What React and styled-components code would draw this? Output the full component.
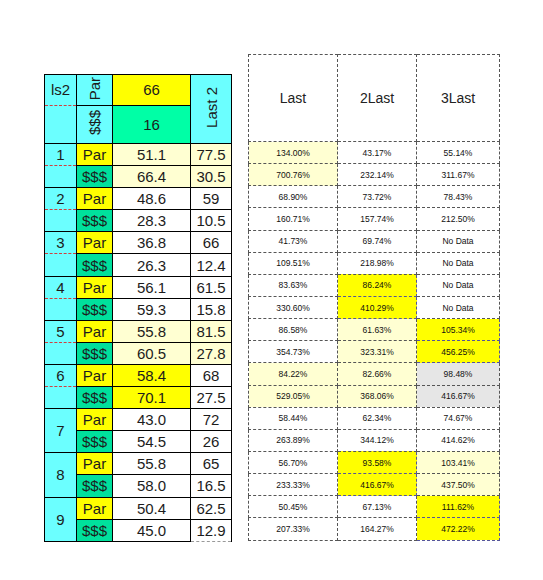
import React from 'react';
import styled, {createGlobalStyle} from 'styled-components';

const colors = {
	cyan: '#6bffff',
	yellow: '#ffff00',
	green: '#00e09c',
	mint: '#00ffa6',
	cream: '#ffffd2',
	gray: '#e6e6e6',
	white: '#ffffff'
};

const holes = [
	{n: 1, split: true, tint: 'cream', par: ['51.1', '77.5'], money: ['66.4', '30.5']},
	{n: 2, split: true, par: ['48.6', '59'], money: ['28.3', '10.5']},
	{n: 3, split: true, par: ['36.8', '66'], money: ['26.3', '12.4']},
	{n: 4, split: true, par: ['56.1', '61.5'], money: ['59.3', '15.8']},
	{n: 5, split: true, tint: 'cream', par: ['55.8', '81.5'], money: ['60.5', '27.8']},
	{n: 6, split: true, mid: 'yellow', par: ['58.4', '68'], money: ['70.1', '27.5']},
	{n: 7, par: ['43.0', '72'], money: ['54.5', '26']},
	{n: 8, par: ['55.8', '65'], money: ['58.0', '16.5']},
	{n: 9, par: ['50.4', '62.5'], money: ['45.0', '12.9']}
];

const ratios = [
	[['134.00%', 'cream'], ['43.17%'], ['55.14%']],
	[['700.76%', 'cream'], ['232.14%'], ['311.67%']],
	[['68.90%'], ['73.72%'], ['78.43%']],
	[['160.71%'], ['157.74%'], ['212.50%']],
	[['41.73%'], ['69.74%'], ['No Data']],
	[['109.51%'], ['218.98%'], ['No Data']],
	[['83.63%'], ['86.24%', 'yellow'], ['No Data']],
	[['330.60%'], ['410.29%', 'yellow'], ['No Data']],
	[['86.58%'], ['61.63%', 'cream'], ['105.34%', 'yellow']],
	[['354.73%'], ['323.31%', 'cream'], ['456.25%', 'yellow']],
	[['84.22%', 'cream'], ['82.66%', 'cream'], ['98.48%', 'gray']],
	[['529.05%', 'cream'], ['368.06%', 'cream'], ['416.67%', 'gray']],
	[['58.44%'], ['62.34%'], ['74.67%']],
	[['263.89%'], ['344.12%'], ['414.62%']],
	[['56.70%'], ['93.58%', 'yellow'], ['103.41%', 'cream']],
	[['233.33%'], ['416.67%', 'yellow'], ['437.50%', 'cream']],
	[['50.45%'], ['67.13%'], ['111.62%', 'yellow']],
	[['207.33%'], ['164.27%'], ['472.22%', 'yellow']]
];

const GlobalStyle = createGlobalStyle`
	body {
		margin: 0;
		background: #fff;
		font-family: "Liberation Sans", Arial, sans-serif;
	}
`;

const Page = styled.div`
	display: flex;
	align-items: flex-start;
	gap: 16px;
	padding: 54px 0 0 44px;
`;

const Scores = styled.table`
	margin-top: 20px;
	border-collapse: collapse;
	table-layout: fixed;
	width: 187px;
	font-size: 15px;
	color: #1c1c1c;
`;

const Col = styled.col`
	width: ${p => p.$w}px;
`;

const HeadRow = styled.tr`
	height: ${p => p.$h}px;
`;

const Row = styled.tr`
	height: 22.1px;
`;

const Cell = styled.td`
	border: 1px solid #000;
	padding: 0;
	text-align: center;
	vertical-align: middle;
	white-space: nowrap;
	background: ${p => colors[p.$bg] || colors.white};
	${p => p.$splitTop && 'border-bottom: 1px dashed #d04040;'}
	${p => p.$splitBottom && 'border-top: 1px dashed #d04040;'}
	${p => p.$ghost && 'border-bottom: 1px dashed #999;'}
`;

const Vertical = styled.span`
	display: inline-block;
	writing-mode: vertical-rl;
	transform: rotate(180deg);
	font-size: ${p => p.$size || 15}px;
`;

const Ratios = styled.table`
	border-collapse: collapse;
	table-layout: fixed;
	width: 251px;
	font-size: 8.5px;
	color: #111;
`;

const RatioHead = styled.th`
	height: 86px;
	border: 1px dashed #555;
	font-size: 14px;
	font-weight: normal;
	color: #222;
	padding: 0;
`;

const RatioRow = styled.tr`
	height: 22.15px;
`;

const RatioCell = styled.td`
	border: 1px dashed ${p => (p.$bg === 'yellow' ? '#55559a' : '#555')};
	padding: 0;
	text-align: center;
	white-space: nowrap;
	background: ${p => colors[p.$bg] || colors.white};
`;

const HoleRows = ({hole, last}) => {
	const rest = hole.mid || hole.tint;
	return (
		<>
			<Row>
				{hole.split
					? <Cell $bg="cyan" $splitTop>{hole.n}</Cell>
					: <Cell $bg="cyan" rowSpan={2}>{hole.n}</Cell>}
				<Cell $bg="yellow">Par</Cell>
				<Cell $bg={rest}>{hole.par[0]}</Cell>
				<Cell $bg={hole.tint}>{hole.par[1]}</Cell>
			</Row>
			<Row>
				{hole.split && <Cell $bg="cyan" $splitBottom />}
				<Cell $bg="green">$$$</Cell>
				<Cell $bg={rest}>{hole.money[0]}</Cell>
				<Cell $bg={hole.tint} $ghost={last}>{hole.money[1]}</Cell>
			</Row>
		</>
	);
};

const App = () => (
	<>
		<GlobalStyle />
		<Page>
			<Scores>
				<colgroup>
					<Col $w={32} />
					<Col $w={36} />
					<Col $w={78} />
					<Col $w={41} />
				</colgroup>
				<tbody>
					<HeadRow $h={30.5}>
						<Cell $bg="cyan" $splitTop>ls2</Cell>
						<Cell $bg="cyan"><Vertical>Par</Vertical></Cell>
						<Cell $bg="yellow">66</Cell>
						<Cell $bg="cyan" rowSpan={2}><Vertical>Last 2</Vertical></Cell>
					</HeadRow>
					<HeadRow $h={38.5}>
						<Cell $bg="cyan" $splitBottom />
						<Cell $bg="cyan"><Vertical>$$$</Vertical></Cell>
						<Cell $bg="mint">16</Cell>
					</HeadRow>
					{holes.map((hole, i) =>
						<HoleRows key={hole.n} hole={hole} last={i === holes.length - 1} />
					)}
				</tbody>
			</Scores>
			<Ratios>
				<colgroup>
					<Col $w={89} />
					<Col $w={79} />
					<Col $w={83} />
				</colgroup>
				<thead>
					<tr>
						<RatioHead>Last</RatioHead>
						<RatioHead>2Last</RatioHead>
						<RatioHead>3Last</RatioHead>
					</tr>
				</thead>
				<tbody>
					{ratios.map((row, i) =>
						<RatioRow key={i}>
							{row.map(([value, bg], j) =>
								<RatioCell key={j} $bg={bg}>{value}</RatioCell>
							)}
						</RatioRow>
					)}
				</tbody>
			</Ratios>
		</Page>
	</>
);

export default App;
